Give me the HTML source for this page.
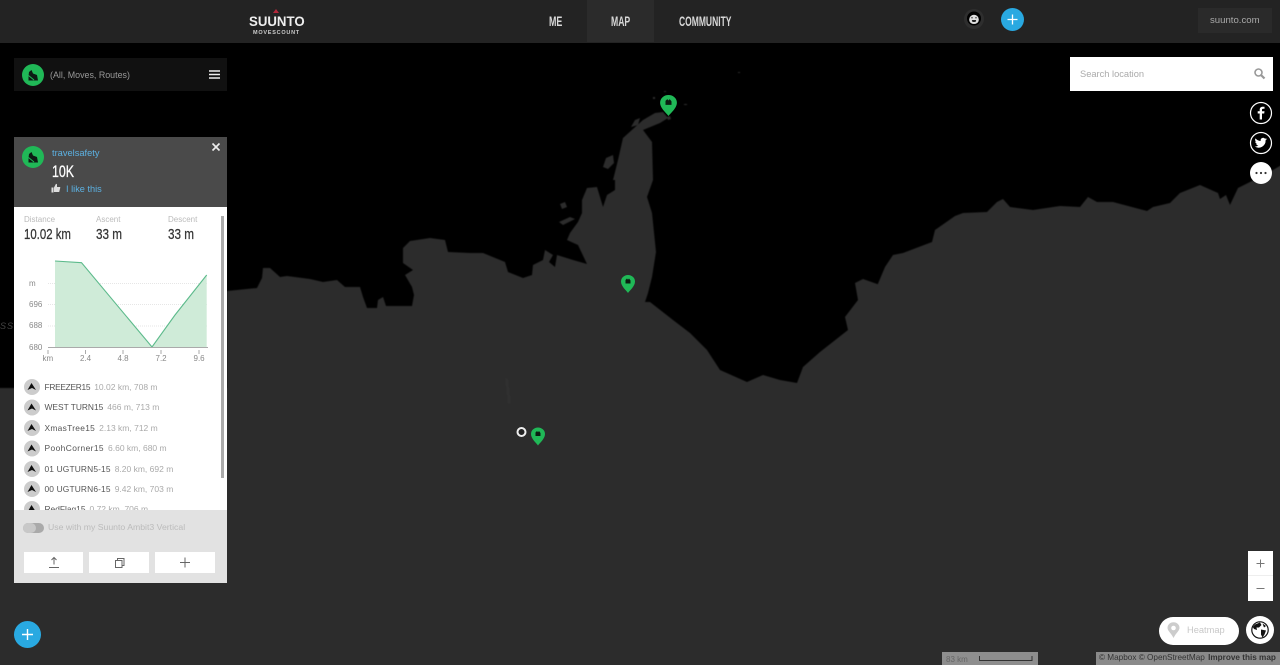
<!DOCTYPE html>
<html><head><meta charset="utf-8"><title>Suunto Movescount Map</title>
<style>
html,body{margin:0;padding:0;width:1280px;height:665px;overflow:hidden;background:#000;font-family:"Liberation Sans",sans-serif}
.a,.t{position:absolute}
.t{white-space:nowrap;line-height:1;transform-origin:0 50%}
svg{position:absolute;overflow:visible}
.n{font-size:13.5px;color:#d8d8d8;font-weight:bold}
.b{background:#fff;top:552px;height:21px}
.name{font-size:8.4px;color:#555;left:44.5px}
.det{font-size:8.5px;color:#aaa;letter-spacing:0;margin-left:4px}
.lab{font-size:8px;color:#bbb;top:216px}
.val{font-size:15px;color:#333;top:227px;-webkit-text-stroke:.25px #333}
.ax{font-size:8px;color:#888}
</style></head><body>

<svg width="1280" height="665" style="left:0;top:0;filter:blur(.5px)">
<rect x="-5" y="-5" width="1290" height="675" fill="#000"/>
<path fill="#2c2c2c" d="M-5 388L227 388L227 291L237 290L257 288L262 278L263 268L270 268L280 277L287 276L310 279L323 282L337 280L345 287L360 287L363 297L367 308L377 308L378 300L383 297L386 306L412 306L414 295L412 287L405 275L413 270L403 263L403 248L410 241L430 238L445 240L448 252L470 253L483 253L505 262L508 272L523 278L532 275L533 265L543 260L545 250L553 255L549 262L555 267L557 255L573 260L587 264L578 245L567 240L570 233L578 222L582 213L582 200L587 188L597 187L603 207L607 195L615 190L615 180L613 180L618 160L623 138L643 120L655 113L663 112L668 118L660 123L643 130L652 142L653 180L647 197L652 213L656 252L652 277L648 293L645 302L650 302L673 320L690 333L707 350L720 370L747 382L763 375L780 380L797 383L803 367L820 352L848 330L845 317L858 300L855 283L863 279L880 285L877 286L885 267L893 255L903 253L932 242L935 230L955 216L963 213L987 212L997 202L1003 199L1010 207L1033 210L1060 206L1080 207L1088 197L1097 202L1113 202L1147 211L1153 207L1170 203L1180 193L1200 185L1218 193L1220 199L1226 195L1230 205L1238 188L1250 182L1273 170L1285 163L1285 670L-5 670Z"/>
<path fill="#2c2c2c" d="M603 167L606 158L613 155L614 163L608 169ZM631 127L635 120L640 118L638 125ZM560 204L565 202L567 207L562 209ZM559 222L570 217L575 219L563 225Z"/>
<path fill="#2c2c2c" d="M684 104h3v1h-3zM664 91h2v1h-2zM653 97h2v2h-2zM738 72h2v1h-2zM667 117l3-1 1 3-3 1z"/>
<path fill="#303030" d="M505 378l3 1 3 24-3 1z"/>
</svg>
<div class="t" style="left:0;top:322px;font-size:9px;color:#444;font-style:italic;letter-spacing:1px">SSS</div>

<!-- header -->
<div class="a" style="left:0;top:0;width:1280px;height:43px;background:#232323"></div>
<div class="a" style="left:587px;top:0;width:67px;height:42px;background:#2b2b2b"></div>
<svg style="left:272px;top:8px" width="8" height="6"><path d="M4 1L7 5H1Z" fill="#b5273a"/></svg>
<div class="t" style="left:249px;top:15px;font-size:13.5px;font-weight:bold;color:#eee;transform:scaleX(.98)">SUUNTO</div>
<div class="t" style="left:253px;top:30.5px;font-size:5.5px;font-weight:bold;color:#ccc;letter-spacing:.75px">MOVESCOUNT</div>
<div class="t n" style="left:549px;top:15px;transform:scaleX(.66)">ME</div>
<div class="t n" style="left:611px;top:15px;transform:scaleX(.64)">MAP</div>
<div class="t n" style="left:679px;top:15px;transform:scaleX(.63)">COMMUNITY</div>
<div class="a" style="left:964px;top:9px;width:20px;height:20px;border-radius:50%;background:#2e2e2e"></div>
<svg style="left:967px;top:11px" width="14" height="15" viewBox="0 0 14 15"><circle cx="7" cy="7.5" r="7" fill="#000"/><path d="M2.2 8.5a4.8 4.8 0 0 1 9.6 0v.5a4.8 4 0 0 1-9.6 0z" fill="#ddd"/><path d="M4.8 9h4.400l-.7 2h-3z" fill="#222"/><circle cx="5" cy="6.8" r=".7" fill="#222"/><circle cx="9" cy="6.8" r=".7" fill="#222"/></svg>
<div class="a" style="left:1001px;top:8px;width:23px;height:23px;border-radius:50%;background:#29a9e1"></div>
<svg style="left:1001px;top:8px" width="23" height="23"><path d="M11.5 6.5v10M6.5 11.5h10" stroke="#fff" stroke-width="1.3"/></svg>
<div class="a" style="left:1198px;top:8px;width:74px;height:25px;background:#2a2a2a"></div>
<div class="t" style="left:1210px;top:16px;font-size:9.6px;color:#aaa">suunto.com</div>

<!-- filter bar -->
<div class="a" style="left:14px;top:58px;width:213px;height:33px;background:#111"></div>
<div class="a" style="left:22px;top:64px;width:22px;height:22px;border-radius:50%;background:#20b857"></div>
<svg style="left:22px;top:64px" width="22" height="22"><path d="M7 8L9.5 6 11 9.5 15 11 16 16.5H6.5V12Z" fill="#0d1a14"/><path d="M6.5 11.5L12 16" stroke="#20b857" stroke-width="1"/></svg>
<div class="t" style="left:50px;top:70.5px;font-size:8.9px;color:#999">(All, Moves, Routes)</div>
<svg style="left:209px;top:70px" width="11" height="10"><path d="M0 1h11M0 4.5h11M0 8h11" stroke="#eee" stroke-width="1.5"/></svg>

<!-- panel -->
<div class="a" style="left:14px;top:137px;width:213px;height:70px;background:#4a4a4a"></div>
<div class="a" style="left:22px;top:146px;width:22px;height:22px;border-radius:50%;background:#20b857"></div>
<svg style="left:22px;top:146px" width="22" height="22"><path d="M7 8L9.5 6 11 9.5 15 11 16 16.5H6.5V12Z" fill="#0d1a14"/><path d="M6.5 11.5L12 16" stroke="#20b857" stroke-width="1"/></svg>
<div class="t" style="left:52px;top:148.5px;font-size:9.3px;color:#5cb1e2">travelsafety</div>
<div class="t" style="left:52px;top:162.5px;font-size:17px;color:#fff;transform:scaleX(.73);-webkit-text-stroke:.3px #fff">10K</div>
<svg style="left:51px;top:183px" width="10" height="10"><path d="M0.5 4.5h2v5h-2zM3 4.5L5 .8l1 .4v2.8h3.2v1l-1 4H3z" fill="#ddd"/></svg>
<div class="t" style="left:66px;top:184.5px;font-size:9.2px;color:#5cb1e2">I like this</div>
<svg style="left:212px;top:143px" width="8" height="8"><path d="M.5.5l7 7M7.5.5l-7 7" stroke="#eee" stroke-width="1.6"/></svg>

<div class="a" style="left:14px;top:207px;width:213px;height:304px;background:#fff;overflow:hidden">
  <div class="t name" style="left:30.5px;top:298px">RedFlag15<span class="det">0.72 km, 706 m</span></div>
</div>
<div class="a" style="left:221px;top:216px;width:3px;height:262px;background:#ababab"></div>

<div class="t lab" style="left:24px">Distance</div>
<div class="t lab" style="left:96px">Ascent</div>
<div class="t lab" style="left:168px">Descent</div>
<div class="t val" style="left:24px;transform:scaleX(.76)">10.02 km</div>
<div class="t val" style="left:96px;transform:scaleX(.78)">33 m</div>
<div class="t val" style="left:168px;transform:scaleX(.78)">33 m</div>

<svg style="left:0;top:0" width="240" height="380">
<path d="M48 283.5h159M48 304.5h159M48 326h159" stroke="#e6e6e6" stroke-width="1" stroke-dasharray="1 1"/>
<path d="M55 261L81.5 262.7L152 347L175 315L206.7 275V347H55Z" fill="#cfebd8"/>
<path d="M55 261L81.5 262.7L152 347L175 315L206.7 275" fill="none" stroke="#5cba8b" stroke-width="1.1"/>
<path d="M48 347.5h160" stroke="#aaa" stroke-width="1"/>
<path d="M48 350v4M85.5 350v4M123 350v4M161 350v4M199 350v4" stroke="#aaa" stroke-width="1"/>
</svg>
<div class="t ax" style="left:29px;top:279.5px">m</div>
<div class="t ax" style="left:29px;top:300.5px">696</div>
<div class="t ax" style="left:29px;top:322px">688</div>
<div class="t ax" style="left:29px;top:343.5px">680</div>
<div class="t ax" style="left:42.5px;top:355px">km</div>
<div class="t ax" style="left:80px;top:355px">2.4</div>
<div class="t ax" style="left:117.5px;top:355px">4.8</div>
<div class="t ax" style="left:155.5px;top:355px">7.2</div>
<div class="t ax" style="left:193.5px;top:355px">9.6</div>

<!-- waypoint list -->
<svg style="left:0;top:0" width="240" height="520">
<defs><g id="wp"><circle r="8" fill="#ccc"/><path d="M-4.5 3L-.5-4L4 3L0 1Z" fill="#111"/></g></defs>
<use href="#wp" x="32" y="387"/><use href="#wp" x="32" y="407.5"/><use href="#wp" x="32" y="428"/><use href="#wp" x="32" y="448.5"/><use href="#wp" x="32" y="469"/><use href="#wp" x="32" y="489"/><use href="#wp" x="32" y="509"/>
</svg>
<div class="t name" style="top:382.5px;letter-spacing:-.3px">FREEZER15<span class="det">10.02 km, 708 m</span></div>
<div class="t name" style="top:403px">WEST TURN15<span class="det">466 m, 713 m</span></div>
<div class="t name" style="top:423.5px;letter-spacing:.3px">XmasTree15<span class="det">2.13 km, 712 m</span></div>
<div class="t name" style="top:444px;letter-spacing:.42px">PoohCorner15<span class="det">6.60 km, 680 m</span></div>
<div class="t name" style="top:464.5px;letter-spacing:.15px">01 UGTURN5-15<span class="det">8.20 km, 692 m</span></div>
<div class="t name" style="top:485px;letter-spacing:.15px">00 UGTURN6-15<span class="det">9.42 km, 703 m</span></div>

<div class="a" style="left:14px;top:510px;width:213px;height:73px;background:#e2e2e2"></div>
<div class="a" style="left:23px;top:523px;width:21px;height:10px;border-radius:5px;background:#aaa"></div>
<div class="a" style="left:23px;top:523px;width:13px;height:10px;border-radius:5px;background:#c8c8c8"></div>
<div class="t" style="left:48px;top:523px;font-size:8.7px;color:#bbb">Use with my Suunto Ambit3 Vertical</div>
<div class="a b" style="left:24px;width:59px"></div>
<div class="a b" style="left:89px;width:60px"></div>
<div class="a b" style="left:155px;width:60px"></div>
<svg style="left:0;top:0" width="240" height="600" fill="none" stroke="#666" stroke-width="1">
<path d="M49 567.5h10M54 564.5v-7M51.5 560l2.5-2.5 2.5 2.5"/>
<path d="M115.5 560.5h6.5v7h-6.5zM117.5 560.5v-2h6.5v7h-2"/>
<path d="M185 557.5v10M180 562.5h10"/>
</svg>

<div class="a" style="left:14px;top:620.5px;width:27px;height:27px;border-radius:50%;background:#29a9e1"></div>
<svg style="left:14px;top:620.5px" width="27" height="27"><path d="M13.5 8v11M8 13.5h11" stroke="#fff" stroke-width="1.4"/></svg>

<!-- search + social -->
<div class="a" style="left:1070px;top:57px;width:203px;height:34px;background:#fff"></div>
<div class="t" style="left:1080px;top:70px;font-size:9.3px;color:#aaa">Search location</div>
<svg style="left:1254px;top:68px" width="12" height="12" fill="none" stroke="#999"><circle cx="4.5" cy="4.5" r="3.5" stroke-width="1.6"/><path d="M7 7l3.5 3.5" stroke-width="2.2"/></svg>
<svg style="left:1249px;top:101px" width="24" height="84">
<circle cx="12" cy="12" r="10.5" fill="#000" stroke="#fff" stroke-width="1.2"/>
<path d="M13 18.5v-6h2.2l.3-2.200H13V9c0-.8.3-1.200 1.200-1.200h1.300V5.800c-.4 0-1-.1-1.800-.1-1.900 0-3 1.100-3 3.100v1.500H8.700v2.200h2v6z" fill="#fff"/>
<circle cx="12" cy="42" r="10.5" fill="#000" stroke="#fff" stroke-width="1.2"/>
<path d="M18 38a5 5 0 0 1-1.500.5 2.500 2.500 0 0 0 1.100-1.400 5 5 0 0 1-1.600.6 2.500 2.500 0 0 0-4.300 2.300 7 7 0 0 1-5.200-2.600 2.500 2.500 0 0 0 .8 3.300 2.500 2.500 0 0 1-1.100-.3 2.500 2.500 0 0 0 2 2.400 2.500 2.500 0 0 1-1.100 0 2.500 2.500 0 0 0 2.300 1.700 5 5 0 0 1-3.600 1 7 7 0 0 0 10.800-6.200A5 5 0 0 0 18 38z" fill="#fff"/>
<circle cx="12" cy="72" r="11" fill="#fff"/>
<circle cx="7.5" cy="72" r="1.1" fill="#333"/><circle cx="12" cy="72" r="1.1" fill="#333"/><circle cx="16.5" cy="72" r="1.1" fill="#333"/>
</svg>

<!-- pins -->
<svg style="left:0;top:0" width="1280" height="665">
<defs><g id="pin"><path d="M0 9C-1.500 6.500-7 2.500-7-2.500A7 6.500 0 0 1 7-2.500C7 2.500 1.500 6.500 0 9Z" fill="#20b857"/><path d="M-2.500-4L-1-5.500 0-4.300 1-5.500 2.500-3.500V-.5H-2.500Z" fill="#0c1c12"/></g></defs>
<use href="#pin" transform="translate(668.5 105.5) scale(1.2 1.17)"/>
<use href="#pin" transform="translate(628 284)"/>
<use href="#pin" transform="translate(538 436.5)"/>
<circle cx="521.5" cy="432" r="4" fill="#222" stroke="#eee" stroke-width="2"/>
</svg>

<!-- zoom -->
<div class="a" style="left:1248px;top:551px;width:25px;height:50px;background:#fff"></div>
<div class="a" style="left:1248px;top:575px;width:25px;height:1px;background:#eee"></div>
<svg style="left:1248px;top:551px" width="25" height="50"><path d="M12.5 8.5v8M8.5 12.5h8M8.5 37.5h8" stroke="#777" stroke-width="1"/></svg>

<!-- heatmap -->
<div class="a" style="left:1159px;top:617px;width:80px;height:28px;border-radius:14px;background:#fff"></div>
<svg style="left:1167px;top:622px" width="13" height="17"><path d="M6.5 16C4 11 .5 9 .5 5.8a6 5.5 0 0 1 12 0C12.5 9 9 11 6.5 16Z" fill="#ccc"/><circle cx="6.5" cy="6" r="2.3" fill="#fff"/></svg>
<div class="t" style="left:1187px;top:625.5px;font-size:9.3px;color:#c8c8c8">Heatmap</div>
<div class="a" style="left:1246px;top:616px;width:28px;height:28px;border-radius:50%;background:#fff"></div>
<svg style="left:1250px;top:620px" width="20" height="20"><circle cx="10" cy="10" r="8.2" fill="#fff" stroke="#111" stroke-width="1.2"/><path d="M5 4.5L10 2.5 11.5 5 9 7.5 6.5 7.5 7 10 4 9 2.8 7ZM11 9.5L16 10.5 14.5 14.5 12.5 17.5 11 14.5ZM12.5 3.5L16 6 14 7.5Z" fill="#111"/></svg>

<!-- attribution -->
<div class="a" style="left:942px;top:652px;width:96px;height:13px;background:#8e8e8e"></div>
<div class="t" style="left:946px;top:656px;font-size:8px;color:#666">83 km</div>
<svg style="left:978px;top:655px" width="56" height="8"><path d="M1.5 1v4.5H54V1" fill="none" stroke="#333" stroke-width="1"/></svg>
<div class="a" style="left:1096px;top:652px;width:184px;height:13px;background:#8a8a8a"></div>
<div class="t" style="left:1099px;top:654px;font-size:8.2px;color:#333">© Mapbox © OpenStreetMap <b style="margin-left:1px">Improve this map</b></div>

</body></html>
